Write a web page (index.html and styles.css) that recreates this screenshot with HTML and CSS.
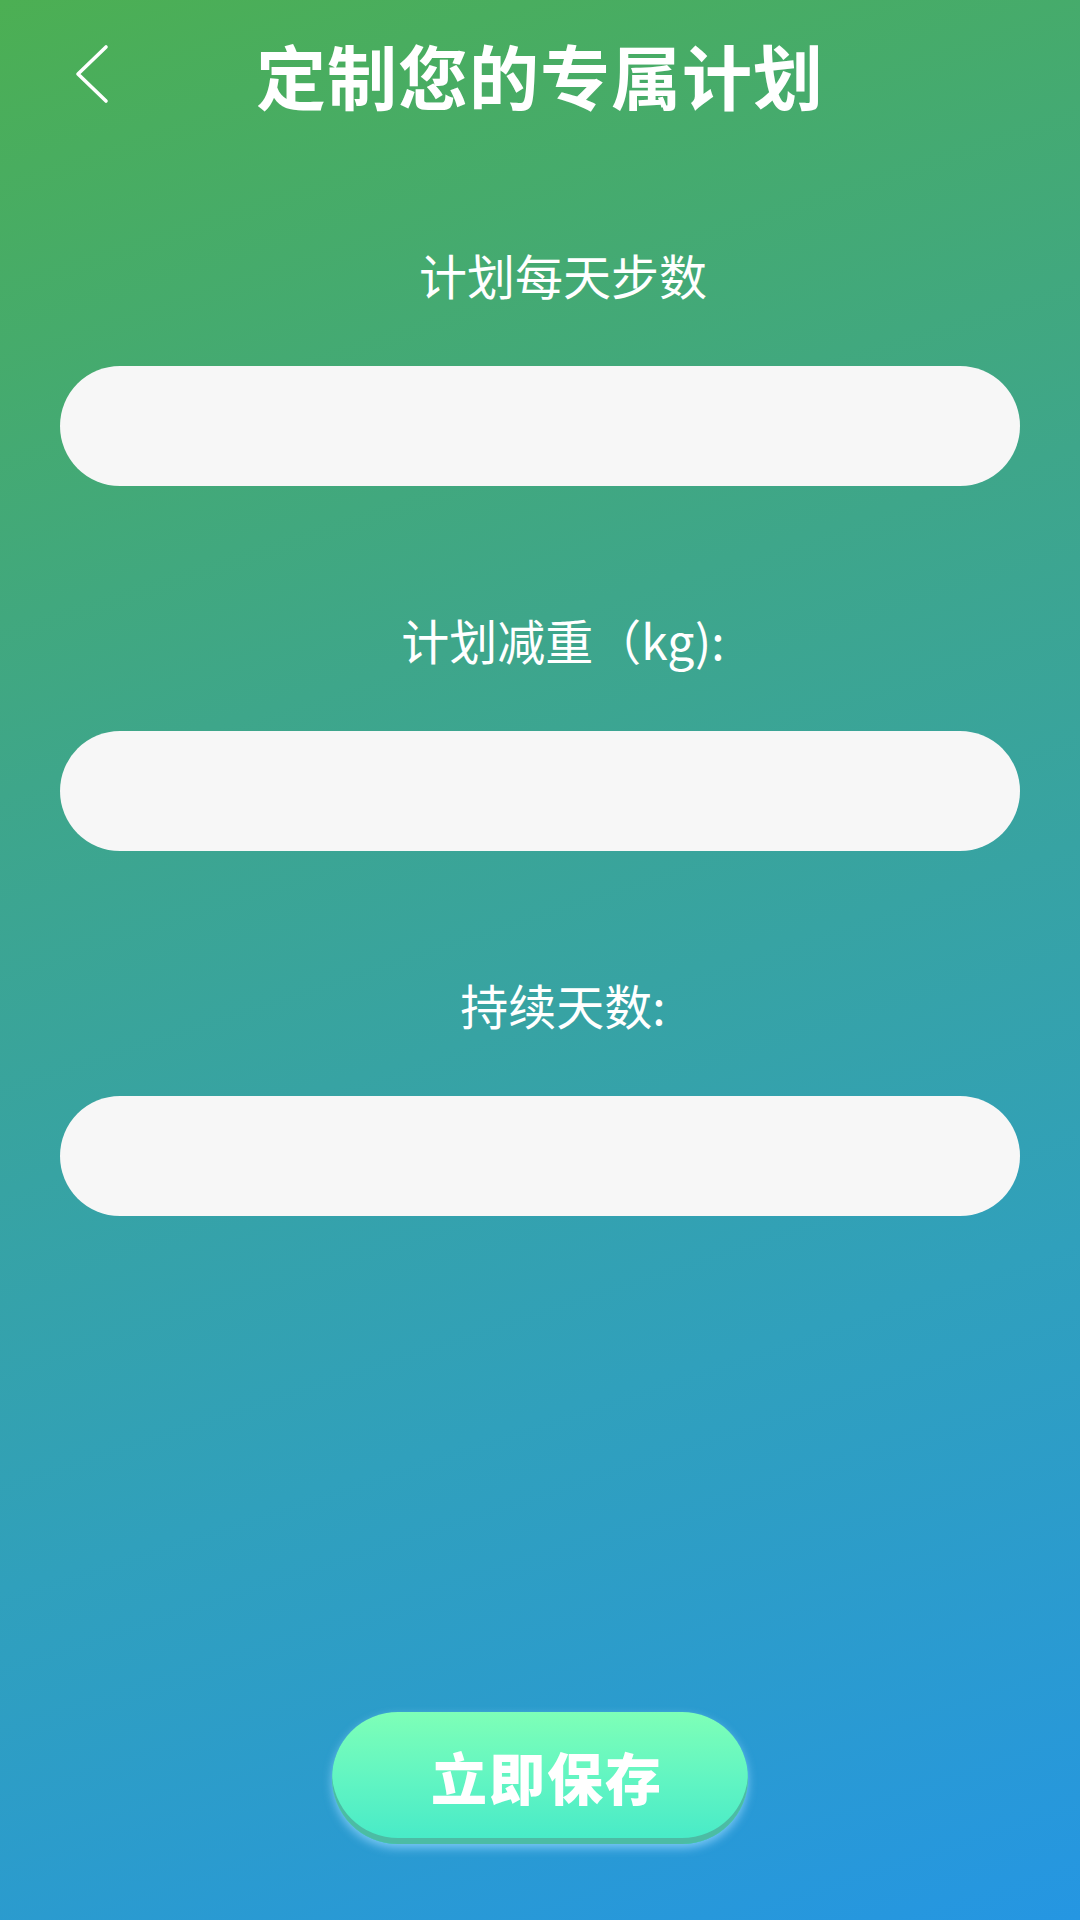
FILE: index.html
```html
<!DOCTYPE html>
<html lang="zh-CN">
<head>
<meta charset="utf-8">
<title>定制您的专属计划</title>
<link rel="stylesheet" href="styles.css">
</head>
<body>
<div class="page">
  <header class="header">
    <span class="back">
      <svg width="40" height="60" viewBox="0 0 40 60"><polyline points="34,3 6,30 34,57" fill="none" stroke="#fff" stroke-width="3.6" stroke-linecap="round" stroke-linejoin="round"/></svg>
    </span>
    <h1 class="title">定制您的专属计划</h1>
  </header>
  <main class="form">
    <div class="field">
      <div class="label">计划每天步数</div>
      <div class="input"></div>
    </div>
    <div class="field">
      <div class="label">计划减重（kg):</div>
      <div class="input"></div>
    </div>
    <div class="field">
      <div class="label">持续天数:</div>
      <div class="input"></div>
    </div>
  </main>
  <div class="actions">
    <div class="save"><span class="save-inner">立即保存</span></div>
  </div>
</div>
</body>
</html>
```
FILE: styles.css
```css
html, body {
  margin: 0;
  padding: 0;
}
body {
  width: 1080px;
  height: 1920px;
  font-family: "Noto Sans CJK SC", "Noto Sans", sans-serif;
  color: #fff;
  background: linear-gradient(162deg, #4caf53 0%, #3ea68a 35%, #30a0bc 70%, #2596e2 100%);
}
.page {
  display: flex;
  flex-direction: column;
  height: 1920px;
  box-sizing: border-box;
  padding-bottom: 76px;
}
.header {
  position: relative;
  height: 150px;
  display: flex;
  align-items: center;
  justify-content: center;
}
.back {
  position: absolute;
  left: 72px;
  top: 44px;
  width: 40px;
  height: 60px;
}
.back svg { display: block; }
.title {
  margin: 0;
  font-size: 70px;
  font-weight: 700;
  line-height: 80px;
  letter-spacing: 1px;
}
.form {
  display: flex;
  flex-direction: column;
  gap: 122px;
  padding: 93px 60px 0;
}
.field {
  display: flex;
  flex-direction: column;
  gap: 61px;
}
.label {
  text-align: center;
  font-size: 48px;
  line-height: 62px;
  font-weight: 400;
  padding-left: 46px;
}
.input {
  height: 120px;
  border-radius: 60px;
  background: #f7f7f7;
}
.actions {
  margin-top: auto;
  display: flex;
  justify-content: center;
}
.save {
  width: 416px;
  height: 132px;
  box-sizing: border-box;
  border-radius: 66px;
  background: linear-gradient(180deg, #7effb7 0%, #62f5c2 50%, #46eac8 100%);
  box-shadow: inset 0 -6px 0 #4cbca4, 0 4px 10px rgba(150, 215, 255, 0.75);
  display: flex;
  align-items: center;
  justify-content: center;
  padding: 0 0 4px 14px;
}
.save-inner {
  font-size: 56px;
  font-weight: 900;
  line-height: 68px;
  letter-spacing: 2px;
  color: #fff;
}
```
